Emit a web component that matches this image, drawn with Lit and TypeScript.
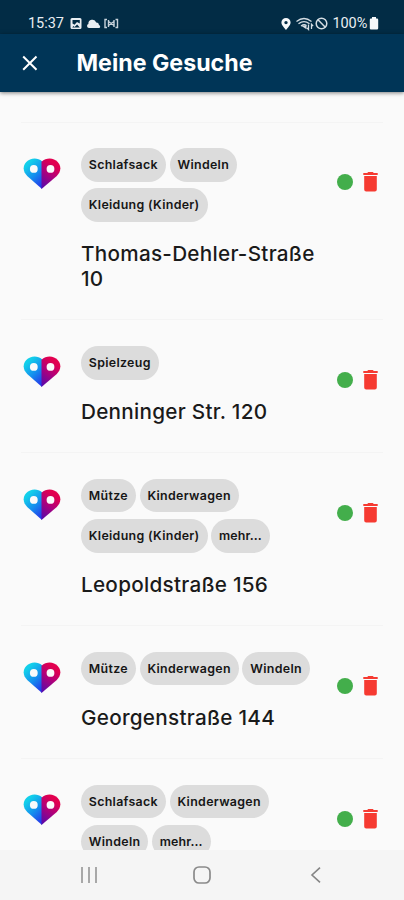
import { LitElement, html, css, svg } from "lit";
import { customElement, property } from "lit/decorators.js";

interface Search {
  tags: string[];
  address: string;
}

const SEARCHES: Search[] = [
  { tags: ["Schlafsack", "Windeln", "Kleidung (Kinder)"], address: "Thomas-Dehler-Straße 10" },
  { tags: ["Spielzeug"], address: "Denninger Str. 120" },
  { tags: ["Mütze", "Kinderwagen", "Kleidung (Kinder)", "mehr..."], address: "Leopoldstraße 156" },
  { tags: ["Mütze", "Kinderwagen", "Windeln"], address: "Georgenstraße 144" },
  { tags: ["Schlafsack", "Kinderwagen", "Windeln", "mehr..."], address: "" },
];

@customElement("status-bar")
class StatusBar extends LitElement {
  static styles = css`
    :host {
      display: flex;
      align-items: center;
      box-sizing: border-box;
      height: 34px;
      padding: 13px 25px 0 28px;
      background: #022c45;
      color: #e9eef2;
      font: 400 14.5px/20px Roboto, sans-serif;
    }
    svg { display: block; flex: none; }
    .time { width: 42px; letter-spacing: -0.05px; }
    .left, .right { display: flex; align-items: center; }
    .left { flex: 1; }
    .percent { margin-left: 4px; width: 36.500px; letter-spacing: -0.1px; white-space: nowrap; }
  `;
  render() {
    return html`
      <div class="left">
        <span class="time">15:37</span>
        <svg width="50" height="14" viewBox="0 0 50 14">
          <path fill="#e9eef2" fill-rule="evenodd" d="M2 1h8q1.500 0 1.500 1.500v8q0 1.500-1.500 1.500h-8q-1.500 0-1.500-1.500v-8q0-1.500 1.500-1.500zM2.500 3v3.500l2 1.200 2.500-2.700 2.800 1.500V3zM2.300 10.500h7.500l-2.700-3-2.500 2.500-1.300-1z"/>
          <path fill="#e9eef2" d="M19 11a2 2 0 0 1-.6-3.900 4 4 0 0 1 7.800-1.600 2.600 2.600 0 0 1 2.700 2.600 1.500 1.500 0 0 1 .3 2.900z"/>
          <g fill="none" stroke="#c7d2da" stroke-width="1.400">
            <path d="M37 2.500h-2v8h2M45.500 2.500h2v8h-2M38.500 3v7M44 3v7M38.500 4.500l5.500 4M44 4.500l-5.500 4"/>
          </g>
        </svg>
      </div>
      <div class="right">
        <svg width="49" height="14" viewBox="0 0 49 14">
          <path fill="#f5f8fa" fill-rule="evenodd" d="M6 1a4.600 4.600 0 0 1 4.600 4.600C10.600 8.500 6 13 6 13S1.400 8.500 1.400 5.600A4.600 4.600 0 0 1 6 1zm0 2.900a1.700 1.700 0 1 0 0 3.400 1.700 1.700 0 0 0 0-3.400z"/>
          <g fill="none" stroke="#d5dde3" stroke-width="1.300">
            <path d="M16.500 4.500q7.500-6 15 0M18.500 6.800q5.500-4.200 11 0M21 9q3-2.200 5.500-.5"/>
            <path d="M28.500 7.500V12.500l-1.700-1.600M31.500 12V7.300l1.600 1.700"/>
            <circle cx="41.500" cy="6.500" r="5.300" stroke-width="1.500"/><path stroke-width="1.500" d="m38 2.800 7.300 7.400"/>
          </g>
          <path fill="#d5dde3" d="m21.500 9 5-.8v4z"/>
        </svg>
        <span class="percent">100%</span>
        <svg width="10" height="13" viewBox="0 0 10 13"><path fill="#f5f8fa" d="M3 0h4v1.500h1q1.200 0 1.200 1.200v8.600q0 1.200-1.200 1.200H2Q.8 12.500.8 11.300V2.700Q.8 1.500 2 1.500h1z"/></svg>
      </div>
    `;
  }
}

@customElement("heart-logo")
class HeartLogo extends LitElement {
  static styles = css`
    :host { display: block; width: 38px; height: 32px; }
    svg { display: block; }
  `;
  render() {
    return html`<svg width="38" height="32" viewBox="0 0 38 32">
      ${svg`
        <defs>
          <linearGradient id="blue" x1="0.2" y1="0" x2="0.8" y2="1">
            <stop offset="0.15" stop-color="#12cfea"/><stop offset="0.6" stop-color="#1589ee"/><stop offset="1" stop-color="#2638e8"/>
          </linearGradient>
          <linearGradient id="red" x1="0.7" y1="0" x2="0.2" y2="1">
            <stop offset="0.15" stop-color="#e2004f"/><stop offset="0.5" stop-color="#b30078"/><stop offset="1" stop-color="#5c0aa8"/>
          </linearGradient>
        </defs>
        <path fill="url(#blue)" d="M19 3.300C14.500-.8 7.200-.2 3.300 4-.5 8.200-.2 13.500 4.200 18L19 31z"/>
        <path fill="url(#red)" d="M18.500 3.800C23.500-.8 30.800-.2 34.700 4c3.800 4.200 3.500 9.500-.9 14L18.500 31z"/>
        <circle cx="10.800" cy="10.900" r="3.900" fill="#fafafa"/>
        <circle cx="27.500" cy="10.900" r="3.900" fill="#fafafa"/>
      `}
    </svg>`;
  }
}

@customElement("search-item")
class SearchItem extends LitElement {
  static properties = { search: { attribute: false } };
  declare search: Search;
  static styles = css`
    :host {
      display: flex;
      align-items: flex-start;
      box-sizing: border-box;
      margin: 0 21px;
      padding: 25.700px 4px 28.300px 2px;
      border-top: 1px solid #f4f4f4;
    }
    heart-logo { flex: none; margin: 9.600px 19.700px 0 0.300px; }
    .body { width: 240px; }
    .tags { display: flex; flex-wrap: wrap; gap: 6.700px 3.700px; }
    .tag {
      box-sizing: border-box;
      height: 33.500px;
      padding: 0 8px 0 7.800px;
      border-radius: 17px;
      background: #dcdcdc;
      color: #161616;
      font: 600 12.4px/34px Inter, sans-serif;
      letter-spacing: 0.32px;
      white-space: nowrap;
    }
    .tag.more { letter-spacing: 0.1px; }
    .address {
      margin-top: 19.300px;
      min-height: 25px;
      color: #1a1a1a;
      font: 500 20.7px/25px Inter, sans-serif;
      letter-spacing: 0.27px;
    }
    .state { display: flex; gap: 10px; margin: 24.300px 0 0 16px; align-items: center; }
    .dot { width: 16px; height: 16px; border-radius: 50%; background: #43ae4b; }
    svg { display: block; }
  `;
  render() {
    return html`
      <heart-logo></heart-logo>
      <div class="body">
        <div class="tags">
          ${this.search.tags.map((t) => html`<span class=${t === "mehr..." ? "tag more" : "tag"}>${t}</span>`)}
        </div>
        <div class="address">${this.search.address}</div>
      </div>
      <div class="state">
        <span class="dot"></span>
        <svg width="15" height="20" viewBox="0 0 15 20">
          <path fill="#f63a31" d="M.3 1h3.900L5.200 0h4.600l1 1h3.900v2H.3zM1.200 4h12.600v13.500q0 2-2 2H3.200q-2 0-2-2z"/>
        </svg>
      </div>
    `;
  }
}

@customElement("app-root")
class AppRoot extends LitElement {
  @property() heading = "Meine Gesuche";
  static styles = css`
    :host {
      display: flex;
      flex-direction: column;
      height: 900px;
      overflow: hidden;
      background: #fafafa;
    }
    status-bar { flex: none; }
    .bar {
      flex: none;
      display: flex;
      align-items: center;
      height: 58px;
      padding-left: 22px;
      background: #003557;
      box-shadow: 0 1px 4px rgba(0, 0, 0, 0.5);
      z-index: 1;
      color: #fff;
      font: 700 23.2px/28px Inter, sans-serif;
    }
    .close { width: 54.500px; }
    .close svg, .nav svg { display: block; }
    .list { flex: 1; min-height: 0; overflow: hidden; padding-top: 29.500px; }
    .nav {
      flex: none;
      display: flex;
      align-items: center;
      justify-content: space-between;
      box-sizing: border-box;
      height: 50px;
      padding: 0 82px 0 80px;
      background: #f5f5f5;
    }
    .home { margin-right: 4px; }
  `;
  render() {
    return html`
      <status-bar></status-bar>
      <header class="bar">
        <span class="close"><svg width="16" height="16" viewBox="0 0 16 16"><path d="m1.200 1.500 13.300 13.300M14.500 1.500 1.200 14.800" stroke="#fff" stroke-width="2"/></svg></span>
        <span class="title">${this.heading}</span>
      </header>
      <main class="list">
        ${SEARCHES.map((s) => html`<search-item .search=${s}></search-item>`)}
      </main>
      <nav class="nav">
        <svg width="18" height="16" viewBox="0 0 18 16"><path d="M2 0v16M9 0v16M16 0v16" stroke="#8e8e8e" stroke-width="1.500"/></svg>
        <svg class="home" width="18" height="18" viewBox="0 0 18 18"><rect x="1" y="1" width="16" height="16" rx="5" fill="none" stroke="#8a8a8a" stroke-width="1.700"/></svg>
        <svg width="12" height="16" viewBox="0 0 12 16"><path d="M10 .7 2 8l8 7.300" fill="none" stroke="#858585" stroke-width="1.600"/></svg>
      </nav>
    `;
  }
}
